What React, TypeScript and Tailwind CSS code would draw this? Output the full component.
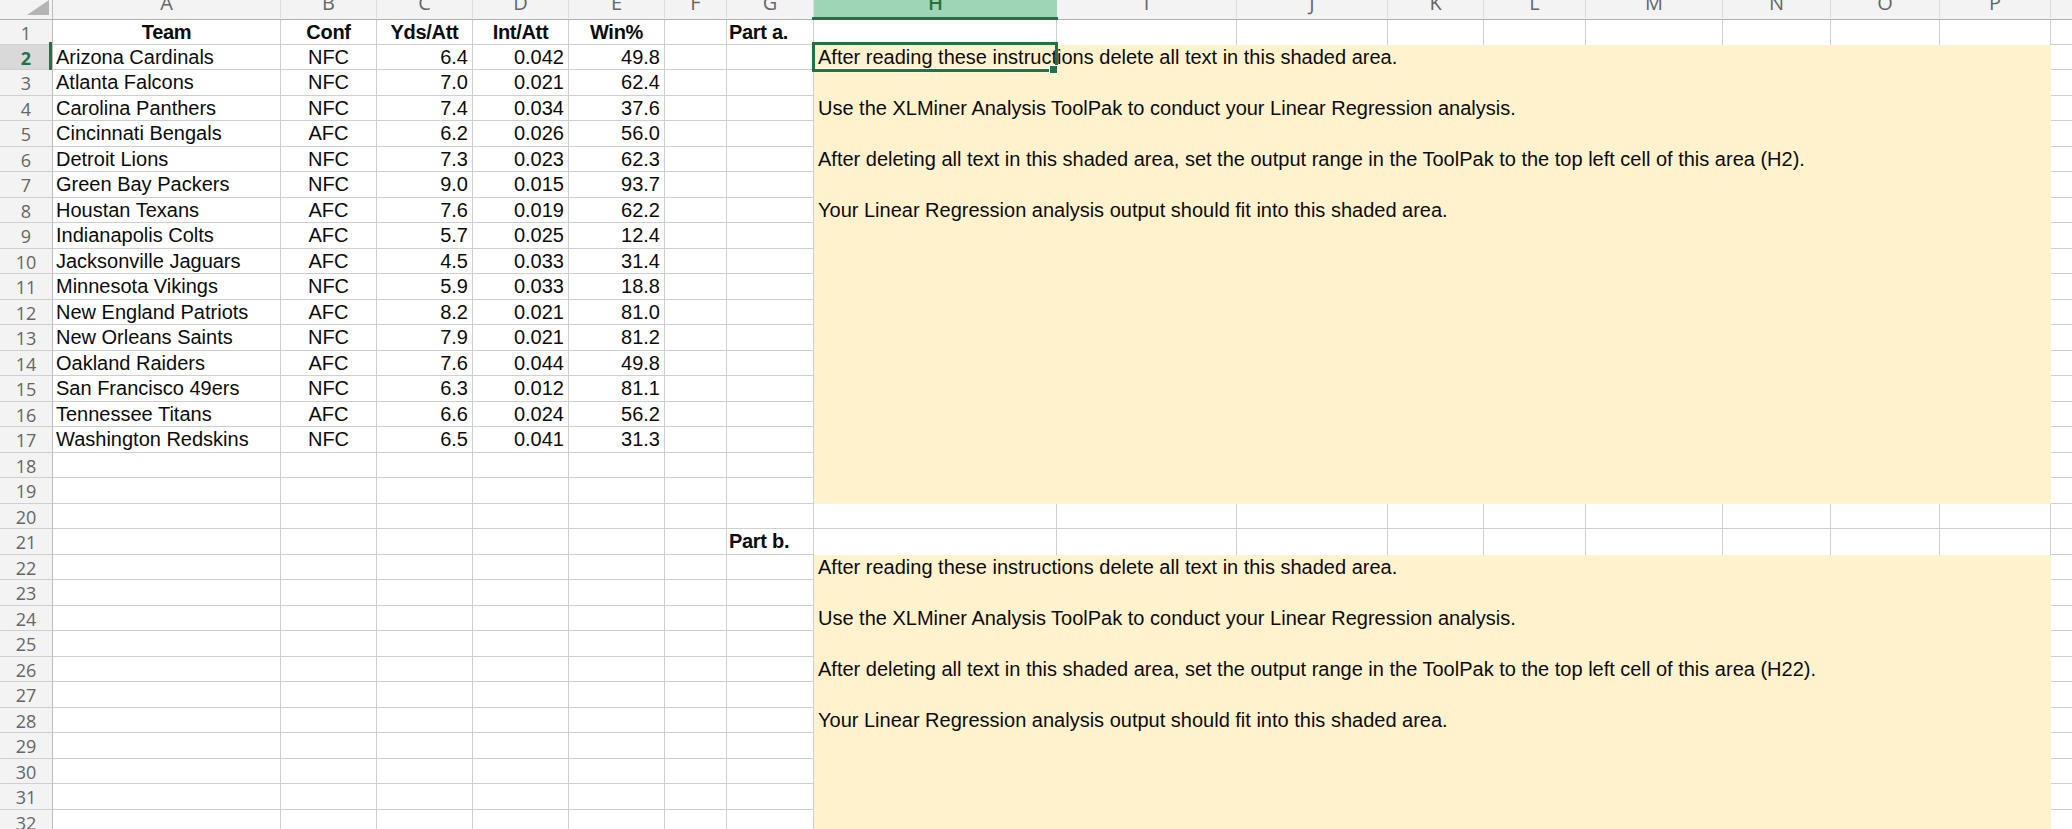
const columns = [
  { label: "A", width: "w-[228px]" },
  { label: "B", width: "w-[96px]" },
  { label: "C", width: "w-[96px]" },
  { label: "D", width: "w-[96px]" },
  { label: "E", width: "w-[96px]" },
  { label: "F", width: "w-[62px]" },
  { label: "G", width: "w-[87px]" },
  { label: "H", width: "w-[243px]" },
  { label: "I", width: "w-[180px]" },
  { label: "J", width: "w-[151px]" },
  { label: "K", width: "w-[96px]" },
  { label: "L", width: "w-[102px]" },
  { label: "M", width: "w-[137px]" },
  { label: "N", width: "w-[108px]" },
  { label: "O", width: "w-[109px]" },
  { label: "P", width: "w-[111px]" },
] as const;

const teams = [
  ["Arizona Cardinals", "NFC", "6.4", "0.042", "49.8"],
  ["Atlanta Falcons", "NFC", "7.0", "0.021", "62.4"],
  ["Carolina Panthers", "NFC", "7.4", "0.034", "37.6"],
  ["Cincinnati Bengals", "AFC", "6.2", "0.026", "56.0"],
  ["Detroit Lions", "NFC", "7.3", "0.023", "62.3"],
  ["Green Bay Packers", "NFC", "9.0", "0.015", "93.7"],
  ["Houstan Texans", "AFC", "7.6", "0.019", "62.2"],
  ["Indianapolis Colts", "AFC", "5.7", "0.025", "12.4"],
  ["Jacksonville Jaguars", "AFC", "4.5", "0.033", "31.4"],
  ["Minnesota Vikings", "NFC", "5.9", "0.033", "18.8"],
  ["New England Patriots", "AFC", "8.2", "0.021", "81.0"],
  ["New Orleans Saints", "NFC", "7.9", "0.021", "81.2"],
  ["Oakland Raiders", "AFC", "7.6", "0.044", "49.8"],
  ["San Francisco 49ers", "NFC", "6.3", "0.012", "81.1"],
  ["Tennessee Titans", "AFC", "6.6", "0.024", "56.2"],
  ["Washington Redskins", "NFC", "6.5", "0.041", "31.3"],
];

const headings = ["Team", "Conf", "Yds/Att", "Int/Att", "Win%"];

function instructions(cell: string): Record<number, string> {
  return {
    0: "After reading these instructions delete all text in this shaded area.",
    2: "Use the XLMiner Analysis ToolPak to conduct your Linear Regression analysis.",
    4: `After deleting all text in this shaded area, set the output range in the ToolPak to the top left cell of this area (${cell}).`,
    6: "Your Linear Regression analysis output should fit into this shaded area.",
  };
}

const partA = instructions("H2");
const partB = instructions("H22");

function isShaded(row: number, col: number) {
  return col >= 7 && ((row >= 2 && row <= 19) || row >= 22);
}

function cellText(row: number, col: number) {
  if (row === 1 && col < 5) return headings[col];
  if (row >= 2 && row <= 17 && col < 5) return teams[row - 2][col];
  if (col === 6 && row === 1) return "Part a.";
  if (col === 6 && row === 21) return "Part b.";
  if (col === 7 && row >= 2 && row <= 19) return partA[row - 2] ?? "";
  if (col === 7 && row >= 22) return partB[row - 22] ?? "";
  return "";
}

function cellAlign(row: number, col: number) {
  if (col === 1 || (row === 1 && col < 5)) return "justify-center";
  if (col >= 2 && col <= 4) return "justify-end pr-[4px]";
  if (col === 6) return "justify-start pl-[2px]";
  if (col === 7) return "justify-start pl-[4px]";
  return "justify-start pl-[3px]";
}

function Cell({ row, col, width }: { row: number; col: number; width: string }) {
  const shaded = isShaded(row, col);
  // the row above a shaded block loses its bottom line, as in the sheet
  const noBottom = shaded || (col >= 7 && (row === 1 || row === 21));
  const text = cellText(row, col);
  const bold = (row === 1 && col < 5) || (col === 6 && (row === 1 || row === 21));
  const stack = row === 2 && col === 7 ? "z-[2]" : col === 7 ? "z-[1]" : "";

  return (
    <div
      className={`relative flex shrink-0 ${width} ${stack} ${cellAlign(row, col)} ${
        shaded ? "bg-[#fff2cc]" : "border-r border-[#cfcfcf]"
      } ${noBottom ? "" : "border-b"}`}
    >
      {text && (
        <span
          className={`whitespace-nowrap font-['Liberation_Sans',Arial,sans-serif] text-[20px] leading-[24px] text-[#0c0c0c] ${
            bold ? "font-bold tracking-[-0.3px]" : ""
          }`}
        >
          {text}
        </span>
      )}
      {row === 2 && col === 7 && (
        <div className="absolute -left-[2px] -top-[3px] z-10 h-[30px] w-[246px] border-[3px] border-[#217346] shadow-[inset_0_-1px_0_#fff]">
          <div className="absolute -bottom-[5px] -right-[3px] h-[9px] w-[9px] border border-white bg-[#217346]" />
        </div>
      )}
    </div>
  );
}

function Row({ row }: { row: number }) {
  const active = row === 2;
  const height = row % 2 === 1 && row > 1 ? "h-[26px]" : "h-[25px]";

  return (
    <div className={`flex ${height}`}>
      <div
        className={`relative w-[53px] shrink-0 border-b border-r border-[#cfcfcf] border-r-[#bdbdbd] text-center text-[18px] leading-[26px] ${
          active ? "bg-[#d9d9d9] font-bold text-[#217346]" : "bg-[#f3f3f3] text-[#666666]"
        }`}
      >
        {row}
        {active && <div className="absolute right-0 -top-[3px] h-[30px] w-[3px] bg-[#217346]" />}
      </div>
      {columns.map((column, col) => (
        <Cell key={column.label} row={row} col={col} width={column.width} />
      ))}
      <div className="flex-1 border-b border-[#cfcfcf]" />
    </div>
  );
}

function ColumnHeader() {
  return (
    <div className="flex h-[20px] border-b border-[#b0b0b0] bg-[#f3f3f3] font-['Open_Sans',sans-serif] text-[20px] leading-[6px] text-[#666666]">
      <div className="relative w-[53px] shrink-0 border-r border-[#bdbdbd]">
        <svg className="absolute left-[27px] top-0" width="22" height="15" viewBox="0 0 22 15">
          <polygon points="22,0 22,15 0,15" fill="#b4b4b4" />
        </svg>
      </div>
      {columns.map((column) =>
        column.label === "H" ? (
          <div
            key={column.label}
            className={`relative shrink-0 bg-[#9fd5b7] text-center font-semibold text-[#217346] ${column.width}`}
          >
            <div className="h-[17px] overflow-hidden">{column.label}</div>
            <div className="absolute -left-[2px] -right-px top-[17px] h-[3px] bg-[#217346]" />
          </div>
        ) : (
          <div
            key={column.label}
            className={`h-[18px] shrink-0 overflow-hidden border-r border-[#dcdcdc] text-center ${column.width}`}
          >
            {column.label}
          </div>
        ),
      )}
    </div>
  );
}

export default function App() {
  const rows = Array.from({ length: 32 }, (_, i) => i + 1);

  return (
    <div className="h-[829px] w-[2072px] overflow-hidden bg-white font-['Open_Sans',sans-serif]">
      <ColumnHeader />
      {rows.map((row) => (
        <Row key={row} row={row} />
      ))}
    </div>
  );
}
